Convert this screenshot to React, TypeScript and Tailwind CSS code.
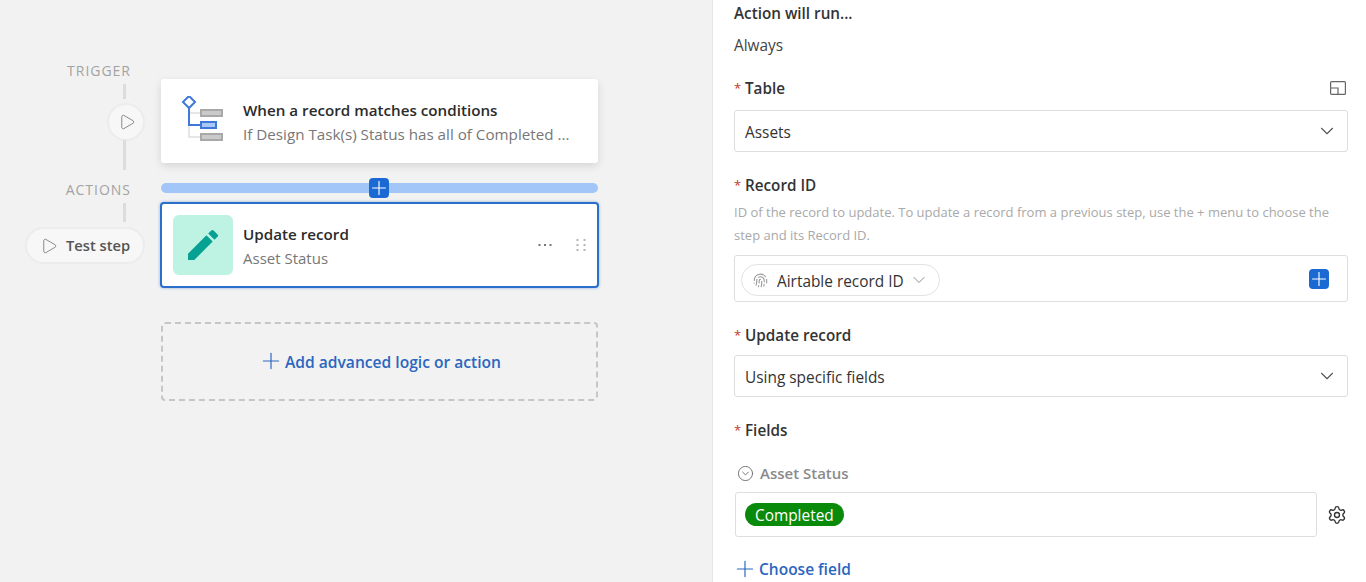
import React from "react";
import { ChevronDown, Plus, Settings, Fingerprint, CircleChevronDown, Play } from "lucide-react";

const FONT = { fontFamily: '"Open Sans", "Noto Sans", sans-serif' };

const Stem = ({ className }: { className: string }) => (
  <div className={`w-[3px] bg-[#dcdcdc] mr-[19px] ${className}`} />
);

const BlueAdd = () => (
  <div className="w-5 h-5 rounded-[4px] bg-[#1b6ad3] flex items-center justify-center">
    <Plus size={22} strokeWidth={1.25} className="text-white shrink-0" />
  </div>
);

const TriggerIcon = () => (
  <svg width="46" height="46" viewBox="0 0 46 46" fill="none" className="mb-[4px]">
    <path d="M9 12V41H21M9 17H21" stroke="#dedede" strokeWidth="1.5" />
    <path d="M9 12V29H21" stroke="#3f78d8" strokeWidth="2" />
    <rect x="4.75" y="1.75" width="8.5" height="8.5" transform="rotate(45 9 6)" fill="white" stroke="#3f78d8" strokeWidth="2" />
    <rect x="21" y="14" width="21" height="6" fill="#cacaca" stroke="#a8a8a8" strokeWidth="2" />
    <rect x="21" y="26" width="15" height="6" fill="#a9c8f5" stroke="#3f78d8" strokeWidth="2" />
    <rect x="21" y="38" width="21" height="6" fill="#cacaca" stroke="#a8a8a8" strokeWidth="2" />
  </svg>
);

const PencilIcon = () => (
  <svg width="40" height="40" viewBox="0 0 24 24" fill="#06a192">
    <path d="M3 17.25V21h3.75L17.81 9.94l-3.75-3.75L3 17.25zM20.71 7.04a.996.996 0 0 0 0-1.41l-2.34-2.34a.996.996 0 0 0-1.41 0l-1.83 1.83 3.75 3.75 1.83-1.83z" />
  </svg>
);

const MoreDots = () => (
  <svg width="14" height="4" viewBox="0 0 14 4" fill="#777" className="mr-[24px]">
    <rect x="0.5" y="1" width="2" height="2" />
    <rect x="6" y="1" width="2" height="2" />
    <rect x="11.5" y="1" width="2" height="2" />
  </svg>
);

const DragDots = () => (
  <svg width="10" height="14" viewBox="0 0 10 14" fill="#b5b5b5">
    {[1, 6, 11].map((y) => (
      <React.Fragment key={y}>
        <rect x="0.5" y={y} width="2" height="2" />
        <rect x="7.5" y={y} width="2" height="2" />
      </React.Fragment>
    ))}
  </svg>
);

const FieldLabel = ({ children }: { children: React.ReactNode }) => (
  <div className="flex items-center text-[15.25px] leading-5 font-semibold text-[#333]">
    <span className="text-[#c0392b] text-[13px] font-normal w-[11px]">*</span>
    {children}
  </div>
);

const SelectBox = ({ value, className }: { value: string; className: string }) => (
  <div className={`h-[42px] border border-[#dedede] rounded-[3px] flex items-center justify-between pl-[10px] pr-[9px] text-[15.4px] text-[#333] ${className}`}>
    <span className="mt-[3px]">{value}</span>
    <ChevronDown size={22} strokeWidth={1.2} className="text-[#555]" />
  </div>
);

export default function App() {
  return (
    <div className="flex h-[582px] w-[1366px] overflow-hidden bg-white" style={FONT}>
      {/* Left: automation steps */}
      <div className="w-[713px] shrink-0 bg-[#f2f2f2] border-r border-[#e6e6e6] pt-[64px] pl-[25px]">
        <div className="flex gap-4">
          <div className="w-[120px] flex flex-col items-end">
            <div className="text-[14px] leading-[14px] tracking-[0.07em] text-[#a3a3a3] h-[14px] pr-[14px]">TRIGGER</div>
            <Stem className="h-[15px] mt-[6px]" />
            <div className="w-[38px] h-[38px] mt-[4px] rounded-full bg-[#f7f7f7] border-2 border-[#ececec] flex items-center justify-center">
              <Play size={18} strokeWidth={1} className="text-[#666] ml-[1px]" />
            </div>
            <Stem className="h-[30px] mt-[-1px]" />
            <div className="text-[14px] leading-[14px] tracking-[0.07em] text-[#a3a3a3] mt-[13px] pr-[14px]">ACTIONS</div>
            <Stem className="h-[19px] mt-[6px]" />
            <div className="w-[120px] h-[37px] mt-[5px] rounded-full bg-[#f7f7f7] border-2 border-[#ececec] flex items-center pl-[13px] gap-[8px] text-[14.7px] font-semibold text-[#555]">
              <Play size={18} strokeWidth={1} className="text-[#666]" />
              Test step
            </div>
          </div>

          <div className="w-[437px] flex flex-col pt-[15px]">
            <div className="h-[84px] bg-white rounded-[3px] shadow-[0_3px_8px_rgba(0,0,0,0.12)] flex items-center pl-[19px] pr-[28px] gap-[17px]">
              <TriggerIcon />
              <div className="min-w-0 mt-[2px]">
                <div className="text-[15.2px] leading-6 font-semibold text-[#2b2b2b] whitespace-nowrap">When a record matches conditions</div>
                <div className="text-[15.2px] leading-6 text-[#777] whitespace-nowrap">If Design Task(s) Status has all of Completed ...</div>
              </div>
            </div>

            <div className="relative h-[10px] mt-[20px] rounded-full bg-[#a2c6f7]">
              <div className="absolute left-[208px] top-[-5px]">
                <BlueAdd />
              </div>
            </div>

            <div className="h-[86px] mt-[9px] mx-[-1px] bg-white rounded-[4px] border-2 border-[#2a6fc9] shadow-[0_0_3px_rgba(42,111,201,0.5)] flex items-center pl-[11px] pr-[11px]">
              <div className="w-[60px] h-[60px] rounded-[6px] bg-[#bef3e4] flex items-center justify-center">
                <PencilIcon />
              </div>
              <div className="ml-[10px] flex-1 mt-[2px]">
                <div className="text-[15.2px] leading-6 font-semibold text-[#2b2b2b]">Update record</div>
                <div className="text-[15px] leading-6 text-[#777]">Asset Status</div>
              </div>
              <MoreDots />
              <DragDots />
            </div>

            <div className="h-[79px] mt-[34px] rounded-[4px] border-2 border-dashed border-[#c6c6c6] flex items-center justify-center gap-[1px] text-[15.6px] font-semibold text-[#2b66bf]">
              <Plus size={26} strokeWidth={1.1} className="mb-[2px]" />
              <span className="mt-[3px]">Add advanced logic or action</span>
            </div>
          </div>
        </div>
      </div>

      {/* Right: step settings */}
      <div className="flex-1 min-w-0 pl-[21px] pr-[18px] pt-[3px]">
        <div className="text-[15.25px] leading-5 font-semibold text-[#333]">Action will run...</div>
        <div className="text-[15.4px] leading-5 text-[#444] mt-[13px]">Always</div>

        <div className="flex items-center justify-between mt-[22px] pr-[2px]">
          <FieldLabel>Table</FieldLabel>
          <svg width="16" height="14" viewBox="0 0 16 14" fill="none" stroke="#666" strokeWidth="1.2">
            <rect x="0.6" y="0.6" width="14.8" height="12.8" rx="1" />
            <path d="M0.6 7H8V13.4" />
          </svg>
        </div>
        <SelectBox value="Assets" className="mt-[12px]" />

        <div className="mt-[23px]">
          <FieldLabel>Record ID</FieldLabel>
        </div>
        <p className="text-[13px] leading-[23px] text-[#a9a9a9] mt-[6px] whitespace-pre-line">
          {"ID of the record to update. To update a record from a previous step, use the + menu to choose the\nstep and its Record ID."}
        </p>
        <div className="h-[47px] mt-[8px] border border-[#dedede] rounded-[3px] flex items-center justify-between pl-[6px] pr-[18px]">
          <div className="h-[32px] w-[199px] mt-[3px] rounded-full border border-[#e3e3e3] flex items-center pl-[11px] text-[15.4px] text-[#333]">
            <Fingerprint size={15} strokeWidth={1.75} className="text-[#999]" />
            <span className="ml-[9px] mt-[3px]">Airtable record ID</span>
            <ChevronDown size={20} strokeWidth={1} className="text-[#777] ml-[5px]" />
          </div>
          <BlueAdd />
        </div>

        <div className="mt-[23px]">
          <FieldLabel>Update record</FieldLabel>
        </div>
        <SelectBox value="Using specific fields" className="mt-[10px]" />

        <div className="mt-[23px]">
          <FieldLabel>Fields</FieldLabel>
        </div>
        <div className="flex items-center gap-[6px] mt-[23px] ml-[3px] text-[15px] leading-5 font-semibold text-[#8a8a8a]">
          <CircleChevronDown size={17} strokeWidth={1.25} className="text-[#666]" />
          Asset Status
        </div>
        <div className="flex items-center mt-[9px] ml-[1px]">
          <div className="w-[582px] h-[45px] border border-[#dedede] rounded-[3px] flex items-center pl-[9px]">
            <div className="h-[23px] px-[10px] rounded-full bg-[#0a8a0a] text-white text-[15.4px] flex items-center">
              <span className="mt-[2px]">Completed</span>
            </div>
          </div>
          <Settings size={20} strokeWidth={1.6} className="text-[#333] ml-[10px]" />
        </div>
        <div className="flex items-center gap-[1px] mt-[19px] ml-[-2px] text-[15.5px] leading-5 font-semibold text-[#2b66bf]">
          <Plus size={26} strokeWidth={1.1} />
          Choose field
        </div>
      </div>
    </div>
  );
}
